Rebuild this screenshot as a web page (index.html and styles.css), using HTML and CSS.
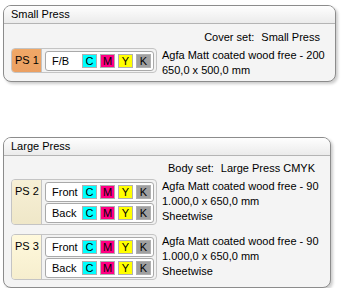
FILE: index.html
```html
<!DOCTYPE html>
<html lang="en">
<head>
  <meta charset="UTF-8">
  <title>Press setup</title>
  <link rel="stylesheet" href="styles.css">
</head>
<body>
  <div class="page">
    <section class="press press-small">
      <div class="press-title">Small Press</div>
      <div class="press-body">
        <div class="set-line"><span>Cover set:</span><span>Small Press</span></div>
        <div class="slot">
          <div class="slot-frame">
            <div class="slot-name name-orange">PS 1</div>
            <div class="sides">
              <div class="side">
                <span class="side-label">F/B</span>
                <span class="ink ink-c">C</span><span class="ink ink-m">M</span><span class="ink ink-y">Y</span><span class="ink ink-k">K</span>
              </div>
            </div>
          </div>
          <div class="paper">Agfa Matt coated wood free - 200<br>650,0 x 500,0 mm</div>
        </div>
      </div>
    </section>

    <section class="press press-large">
      <div class="press-title">Large Press</div>
      <div class="press-body">
        <div class="set-line"><span>Body set:</span><span>Large Press CMYK</span></div>
        <div class="slot">
          <div class="slot-frame">
            <div class="slot-name name-cream">PS 2</div>
            <div class="sides">
              <div class="side">
                <span class="side-label">Front</span>
                <span class="ink ink-c">C</span><span class="ink ink-m">M</span><span class="ink ink-y">Y</span><span class="ink ink-k">K</span>
              </div>
              <div class="side">
                <span class="side-label">Back</span>
                <span class="ink ink-c">C</span><span class="ink ink-m">M</span><span class="ink ink-y">Y</span><span class="ink ink-k">K</span>
              </div>
            </div>
          </div>
          <div class="paper">Agfa Matt coated wood free - 90<br>1.000,0 x 650,0 mm<br>Sheetwise</div>
        </div>
        <div class="slot">
          <div class="slot-frame">
            <div class="slot-name name-light">PS 3</div>
            <div class="sides">
              <div class="side">
                <span class="side-label">Front</span>
                <span class="ink ink-c">C</span><span class="ink ink-m">M</span><span class="ink ink-y">Y</span><span class="ink ink-k">K</span>
              </div>
              <div class="side">
                <span class="side-label">Back</span>
                <span class="ink ink-c">C</span><span class="ink ink-m">M</span><span class="ink ink-y">Y</span><span class="ink ink-k">K</span>
              </div>
            </div>
          </div>
          <div class="paper">Agfa Matt coated wood free - 90<br>1.000,0 x 650,0 mm<br>Sheetwise</div>
        </div>
      </div>
    </section>
  </div>
</body>
</html>
```

FILE: styles.css
```css
* {
  box-sizing: border-box;
}
body {
  margin: 0;
  background: #fff;
  color: #000;
  font-family: 'Liberation Sans', Arial, sans-serif;
  font-size: 11px;
  line-height: 15px;
}
.page {
  padding: 5px 0 0 3px;
}
.press {
  border: 1px solid #8c8c8c;
  border-radius: 8px;
  background: #f4f4f4;
  box-shadow: 2px 2px 3px rgba(0,0,0,0.2);
  overflow: hidden;
}
.press-small {
  width: 333px;
}
.press-large {
  width: 328px;
  margin-top: 55px;
}
.press-title {
  height: 18px;
  padding: 1px 0 0 7px;
  border-bottom: 1px solid #b4b4b4;
  background: linear-gradient(#fefefe, #ebebeb);
}
.press-body {
  padding: 5px 15px 3px 7px;
}
.press-small .press-body {
  padding-top: 6px;
}
.press-large .press-body {
  padding-bottom: 7px;
}
.set-line {
  display: flex;
  justify-content: flex-end;
  gap: 7px;
  margin-bottom: 3px;
}
.slot {
  display: flex;
  align-items: flex-start;
  gap: 5px;
}
.slot + .slot {
  margin-top: 9px;
}
.slot-frame {
  display: flex;
  flex-shrink: 0;
  align-items: stretch;
  width: 146px;
  border: 1px solid #c4c4c4;
  border-radius: 4px;
  background: #f2f2f2;
  overflow: hidden;
}
.slot-name {
  flex-shrink: 0;
  width: 30px;
  padding: 4px 0 0 3px;
  border-right: 1px solid #c4c4c4;
  white-space: nowrap;
}
.press-small .slot-name {
  padding-top: 4px;
}
.name-orange {
  background: linear-gradient(#f0a867, #eba062);
}
.name-cream {
  background: linear-gradient(#f7f0d6, #efe7c8);
}
.name-light {
  background: linear-gradient(#fff9dc, #f6eece);
}
.sides {
  display: flex;
  flex-direction: column;
  flex-shrink: 0;
  gap: 1px;
  padding: 2px 2px 1px 3px;
}
.side {
  display: flex;
  align-items: center;
  gap: 3px;
  width: 109px;
  height: 20px;
  padding: 0 2px 0 6px;
  border: 1px solid #a9a9a9;
  border-radius: 3px;
  background: #fff;
}
.side-label {
  flex-shrink: 0;
  width: 27px;
}
.ink {
  flex-shrink: 0;
  width: 15px;
  height: 14px;
  border: 1px solid #b0b0b0;
  line-height: 12px;
  text-align: center;
}
.ink-c {
  background: #00ffff;
}
.ink-m {
  background: #ff0084;
}
.ink-y {
  background: #ffff00;
}
.ink-k {
  background: #a0a0a0;
}
.paper {
  white-space: nowrap;
}
```
